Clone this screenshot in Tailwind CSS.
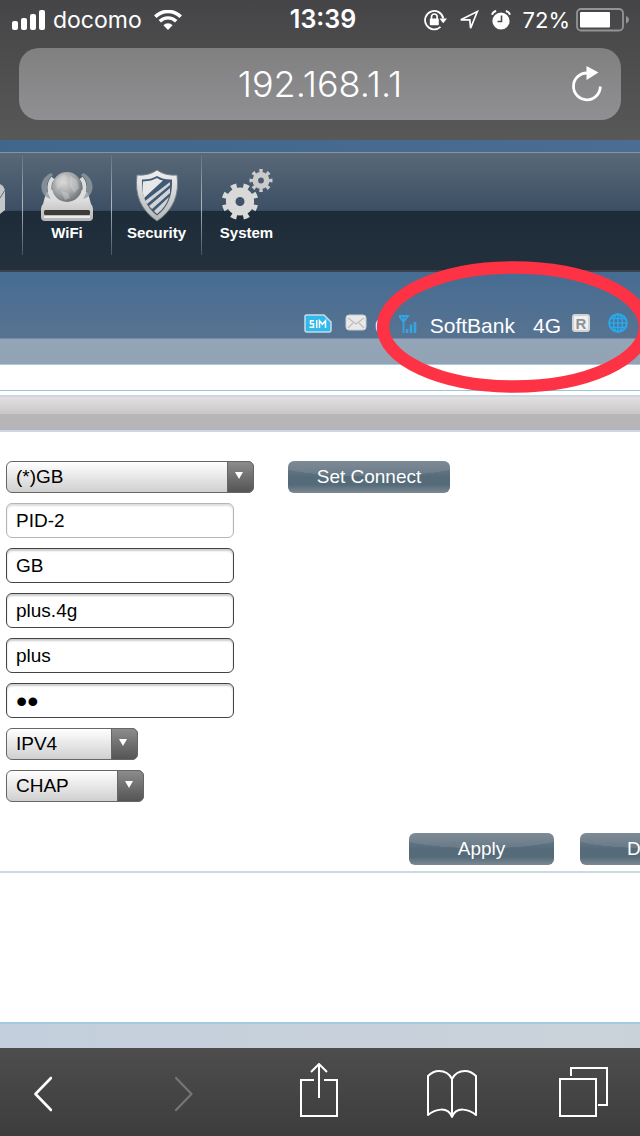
<!DOCTYPE html>
<html lang="en">
<head>
<meta charset="utf-8">
<meta name="viewport" content="width=device-width, initial-scale=1">
<title>192.168.1.1</title>
<script src="https://cdn.jsdelivr.net/npm/@tailwindcss/browser@4"></script>
</head>
<body class="flex min-h-screen flex-col overflow-x-hidden bg-white font-['Liberation_Sans',Arial,sans-serif] text-[19px]">

<header class="h-[140px] bg-linear-to-b from-[#454547] to-[#585858] font-['Inter',sans-serif] text-white">
  <div class="grid h-12 grid-cols-[1fr_auto_1fr] items-center pb-2 pl-3 pr-[6px] text-[22px]">
    <div class="flex items-center">
      <svg class="mr-2 h-5 w-[33px]" viewBox="0 0 33 20" fill="#fff" aria-hidden="true"><rect x="0" y="11" width="6" height="9" rx="2"/><rect x="9" y="8" width="6" height="12" rx="2"/><rect x="18" y="4" width="6" height="16" rx="2"/><rect x="27" y="0" width="6" height="20" rx="2"/></svg>
      <span class="text-[23px]">docomo</span>
      <svg class="ml-3 h-5 w-7" viewBox="0 0 28 20" aria-hidden="true"><path d="M1.3 6.7a18 18 0 0 1 25.4 0" fill="none" stroke="#fff" stroke-width="3.6"/><path d="M5.8 11.3a11.6 11.6 0 0 1 16.4 0" fill="none" stroke="#fff" stroke-width="3.4"/><path d="M14 20l-4.6-4.8a6.6 6.6 0 0 1 9.2 0z" fill="#fff"/></svg>
    </div>
    <time class="text-[25px] font-semibold">13:39</time>
    <div class="mr-[5px] flex items-center justify-end">
      <svg class="mr-3 h-[22px] w-[23px]" viewBox="0 0 23 22" fill="none" stroke="#fff" aria-hidden="true"><path d="M19.300 9.500A9.200 9.200 0 1 0 16.500 17.900" stroke-width="1.800"/><path d="M15.400 9.500h7.600l-3.800 4.800z" fill="#fff" stroke="none"/><rect x="5.800" y="9.600" width="9" height="6.600" rx="1" fill="#fff" stroke="none"/><path d="M7.500 10V7.800a2.800 2.800 0 0 1 5.600 0V10" stroke-width="1.700"/></svg>
      <svg class="mr-3 h-5 w-5" viewBox="0 0 20 20" aria-hidden="true"><path d="M1.800 9.800L18.300 1.600L11.600 18.200L10.800 9.900z" fill="none" stroke="#fff" stroke-width="1.700"/></svg>
      <svg class="mr-3 h-5 w-5" viewBox="0 0 20 20" aria-hidden="true"><circle cx="10" cy="11" r="8.600" fill="#fff"/><path d="M1 4.800A5.500 5.500 0 0 1 5.200 1M19 4.800A5.500 5.500 0 0 0 14.800 1" fill="none" stroke="#fff" stroke-width="1.900"/><path d="M10.500 5.500v6H6.500" fill="none" stroke="#4a4a4c" stroke-width="1.600"/></svg>
      <span>72%</span>
      <svg class="ml-[6px] h-6 w-[53px] shrink-0" viewBox="0 0 53 24" aria-hidden="true"><rect x="1" y="1" width="46" height="21.500" rx="4" fill="none" stroke="#949496" stroke-width="1.800"/><rect x="4" y="4" width="30" height="15.500" rx="1" fill="#fff"/><path d="M50 8c4 1.500 4 6 0 7.500z" fill="#949496"/></svg>
    </div>
  </div>
  <div class="mx-[19px] flex h-[72px] items-center rounded-[20px] bg-linear-to-b from-[#808080] to-[#909094] pr-[18px]">
    <span class="w-[50px]"></span>
    <span class="flex-1 text-center text-[36px] font-light">192.168.1.1</span>
    <button type="button" aria-label="Reload"><svg class="h-9 w-8" viewBox="0 0 32 36"><path d="M29.300 20.500A13.400 13.400 0 1 1 16 7h1" fill="none" stroke="#fff" stroke-width="2.800"/><path d="M15.500 0L27.500 6.500L15.500 14z" fill="#fff"/></svg></button>
  </div>
</header>

<main class="flex flex-1 flex-col overflow-hidden">
  <div class="h-3 bg-linear-to-r from-[#3f678c] to-[#4b6c93]"></div>

  <nav class="flex h-[120px] border-t border-b-2 border-t-[#8495a5] border-b-[#3a434c] bg-[linear-gradient(#596978,#3c4f64_49%,#1e2c3a_50%,#23303c)] text-[15px] font-bold text-white" aria-label="Main">
    <a href="#" aria-label="Messages" class="w-[22px] pt-7"><svg class="h-9 w-2" viewBox="0 0 8 36"><path d="M0 3l3 2 2 4v20l-5 4z" fill="#c4c7c9"/><path d="M0 17l5-8" stroke="#636a70" stroke-width="1"/></svg></a>
    <span class="mt-[2px] h-[100px] w-px bg-linear-to-b from-[#65727f] via-[#b0b8bf] to-[#4a5560]"></span>
    <a href="#" class="flex w-[88px] flex-col items-center pt-4"><svg class="h-[53px] w-14" viewBox="0 0 56 53" aria-hidden="true">
      <defs><linearGradient id="metal" x1="0" y1="0" x2="0" y2="1"><stop offset="0" stop-color="#f0f0f0"/><stop offset="1" stop-color="#b5b5b5"/></linearGradient><radialGradient id="ball" cx=".4" cy=".35" r=".65"><stop offset="0" stop-color="#d8d8d8"/><stop offset=".6" stop-color="#a5a7a9"/><stop offset="1" stop-color="#70767b"/></radialGradient></defs>
      <path d="M7 24L4 35q-2 2-2 5v8q0 4 4 4h44q4 0 4-4v-8q0-3-2-5l-3-11-5-3H12z" fill="url(#metal)"/>
      <path d="M12 4C2 8-1 21 7 28l5 2C6 20 7 11 14 6zM44 4c10 4 13 17 5 24l-5 2c6-10 5-19-2-24z" fill="#929a9f" opacity=".8"/>
      <path d="M14 9c-6 7-4 18 4 23M42 9c6 7 4 18-4 23" fill="none" stroke="#dddddd" stroke-width="4"/>
      <circle cx="28" cy="18" r="15" fill="url(#ball)"/>
      <path d="M17 11l8-6 4 5-5 2-1 5-5 3zM31 7l7 4 2 8-5 5-4-7zM22 22l7 2 2 5-5 2z" fill="#e0e0e0" opacity=".35"/>
      <rect x="5" y="41" width="46" height="5" rx="1.500" fill="#3d3c39"/><rect x="5" y="47" width="46" height="2" fill="#fff" opacity=".7"/></svg>
      <span>WiFi</span></a>
    <span class="mt-[2px] h-[100px] w-px bg-linear-to-b from-[#65727f] via-[#b0b8bf] to-[#4a5560]"></span>
    <a href="#" class="flex w-[89px] flex-col items-center pt-4"><svg class="h-[53px] w-11" viewBox="0 0 44 53" aria-hidden="true">
      <path d="M22 1q8 6 20 5 4 30-20 46Q-2 36 2 6 14 7 22 1z" fill="url(#metal)" stroke="#74818c" stroke-width="1"/>
      <path d="M22 7q7 4 15 3.500 1 24-15 36Q6 34.500 7 10.500 15 11 22 7z" fill="#405a75"/>
      <path d="M22 9q3 2 6 2.500L9 29Q7 22 8 12.500 17 12 22 9z" fill="#e8e8e8"/>
      <path d="M35 13v3L12 35l-2-3zM35 19v5L17 40l-3-3zM34 28q-3 10-12 17l-3-3z" fill="#d2d3d4"/></svg>
      <span>Security</span></a>
    <span class="mt-[2px] h-[100px] w-px bg-linear-to-b from-[#65727f] via-[#b0b8bf] to-[#4a5560]"></span>
    <a href="#" class="flex w-[89px] flex-col items-center pt-4"><svg class="h-[53px] w-[54px]" viewBox="0 0 54 53" fill="none" stroke="#d9d9d9" aria-hidden="true">
      <circle cx="20" cy="32.500" r="9.300" stroke-width="9.600"/><circle cx="20" cy="32.500" r="14.800" stroke-width="7" pathLength="160" stroke-dasharray="9 11" stroke-dashoffset="14.500"/>
      <circle cx="41" cy="11.500" r="5.700" stroke-width="5.600" stroke="#cbcbcb"/><circle cx="41" cy="11.500" r="9" stroke-width="5" stroke="#cbcbcb" pathLength="160" stroke-dasharray="9 11" stroke-dashoffset="4.500"/></svg>
      <span>System</span></a>
  </nav>

  <section class="relative h-[93px] border-b border-[#a9cbe0] bg-[linear-gradient(#466c92,#577391_66px,#94a5b7_67px,#91a3b4)] text-[21px] text-white" aria-label="Connection status">
    <div class="flex h-[67px] items-end justify-end pb-[3px] pr-3">
      <svg class="mb-[3px] mr-[13px] h-[19px] w-7" viewBox="0 0 28 19" role="img" aria-label="SIM card"><path d="M2 1h18l7 7v8q0 2-2 2H3q-2 0-2-2V2z" fill="#2fb9ed" stroke="#c5dce8" stroke-width="1.500"/><path d="M10 6.800H6.500v2.900h3v3.500H5.500M12.700 6v8M15.500 14V6.800l3 3.500 3-3.500V14" fill="none" stroke="#fff" stroke-width="1.500"/></svg>
      <svg class="mb-1 mr-2 h-[18px] w-[22px]" viewBox="0 0 22 18" role="img" aria-label="Messages"><rect x="1" y="1" width="20" height="15" rx="3" fill="#e9e9e9" stroke="#c9ced2"/><path d="M3 4l8 6 8-6M3 14l5-5M19 14l-5-5" fill="none" stroke="#bdbdbd" stroke-width="1.200"/></svg>
      <span class="mr-3 leading-5">0</span>
      <svg class="mb-[2px] mr-[13px] h-[19px] w-[18px]" viewBox="0 0 18 19" fill="none" stroke="#35a4e5" role="img" aria-label="Signal"><path d="M4.500 1v17M0 1h9L4.500 7z" stroke-width="1.800"/><path d="M8 18v-4M12 18V9.500M16 18V7" stroke-width="2.600"/></svg>
      <span class="mr-[18px] leading-5">SoftBank</span>
      <span class="mr-[11px] leading-5">4G</span>
      <span class="mb-1 mr-[18px] grid h-[18px] w-[18px] place-items-center rounded-[3px] border-2 border-[#d2d2d2] bg-[#f0f0f0] text-[15px] font-bold leading-none text-[#8d929a]">R</span>
      <svg class="mb-[3px] h-5 w-5" viewBox="0 0 20 20" fill="none" stroke="#28a9ec" role="img" aria-label="Internet"><circle cx="10" cy="10" r="8.800" stroke-width="2"/><ellipse cx="10" cy="10" rx="4.500" ry="9" stroke-width="1.600"/><path d="M10 1v18M1 10h18M2.500 5.500h15M2.500 14.500h15" stroke-width="1.600"/></svg>
    </div>
    <svg class="pointer-events-none absolute -right-[14px] -top-3 z-10 h-[134px] w-[280px]" viewBox="0 0 280 134" fill="none" aria-hidden="true"><ellipse cx="140" cy="67" rx="131" ry="59.500" stroke="#fd3244" stroke-width="12.500"/></svg>
  </section>

  <div class="h-[26px] border-b border-[#9cc4dc] bg-white"></div>
  <div class="mt-1 h-[37px] border-y-2 border-[#cbd7e2] bg-[linear-gradient(#e2e0e1,#c9c7c8_50%,#b9b6b8_51%,#b6b4b6)]"></div>

  <form class="border-b-2 border-[#cbd9e0] pb-[6px] pl-[6px] pt-[29px]">
    <div class="flex items-start gap-[34px]">
      <div class="flex flex-col items-start gap-[10px]">
        <div class="relative w-[248px]">
          <select aria-label="Profile" class="block h-8 w-full appearance-none rounded-md border border-[#666] bg-linear-to-b from-white to-[#d0d0d0] pl-[9px] leading-7 text-black"><option>(*)GB</option></select>
          <span class="pointer-events-none absolute inset-y-0 right-0 grid w-[27px] place-items-center rounded-r-md border border-[#666] bg-linear-to-b from-[#8c8c8c] to-[#555] pb-1 pr-1"><svg class="h-[7px] w-2" viewBox="0 0 10 8" preserveAspectRatio="none" aria-hidden="true"><path d="M0 0h10L5 8z" fill="#fff"/></svg></span>
        </div>
        <input aria-label="PID" value="PID-2" readonly class="h-[35px] w-[228px] rounded-md border border-[#b5b5b5] bg-white px-[9px] text-black shadow-[inset_0_2px_2px_#ddd]">
        <input aria-label="Name" value="GB" class="h-[35px] w-[228px] rounded-md border border-[#444] bg-white px-[9px] text-black shadow-[inset_0_2px_2px_#ccc]">
        <input aria-label="APN" value="plus.4g" class="h-[35px] w-[228px] rounded-md border border-[#444] bg-white px-[9px] text-black shadow-[inset_0_2px_2px_#ccc]">
        <input aria-label="User name" value="plus" class="h-[35px] w-[228px] rounded-md border border-[#444] bg-white px-[9px] text-black shadow-[inset_0_2px_2px_#ccc]">
        <input aria-label="Password" type="password" value="ab" class="h-[35px] w-[228px] rounded-md border border-[#444] bg-white px-[9px] text-[32px] text-black shadow-[inset_0_2px_2px_#ccc]">
        <div class="relative w-[132px]">
          <select aria-label="IP type" class="block h-8 w-full appearance-none rounded-md border border-[#666] bg-linear-to-b from-white to-[#d0d0d0] pl-[9px] leading-7 text-black"><option>IPV4</option></select>
          <span class="pointer-events-none absolute inset-y-0 right-0 grid w-[27px] place-items-center rounded-r-md border border-[#666] bg-linear-to-b from-[#8c8c8c] to-[#555] pb-1 pr-1"><svg class="h-[7px] w-2" viewBox="0 0 10 8" preserveAspectRatio="none" aria-hidden="true"><path d="M0 0h10L5 8z" fill="#fff"/></svg></span>
        </div>
        <div class="relative w-[138px]">
          <select aria-label="Authentication" class="block h-8 w-full appearance-none rounded-md border border-[#666] bg-linear-to-b from-white to-[#d0d0d0] pl-[9px] leading-7 text-black"><option>CHAP</option></select>
          <span class="pointer-events-none absolute inset-y-0 right-0 grid w-[27px] place-items-center rounded-r-md border border-[#666] bg-linear-to-b from-[#8c8c8c] to-[#555] pb-1 pr-1"><svg class="h-[7px] w-2" viewBox="0 0 10 8" preserveAspectRatio="none" aria-hidden="true"><path d="M0 0h10L5 8z" fill="#fff"/></svg></span>
        </div>
      </div>
      <button type="button" class="h-8 w-[162px] rounded-md bg-[radial-gradient(62%_48%_at_50%_0%,#ffffff18_98%,transparent_100%),linear-gradient(#717f8b,#566b7a_50%,#566b7a_75%,#7c8993)] text-white">Set Connect</button>
    </div>
    <div class="-mr-[85px] mt-[31px] flex justify-end gap-[26px]">
      <button type="button" class="h-8 w-[145px] rounded-md bg-[radial-gradient(62%_48%_at_50%_0%,#ffffff18_98%,transparent_100%),linear-gradient(#717f8b,#566b7a_50%,#566b7a_75%,#7c8993)] text-white">Apply</button>
      <button type="button" class="h-8 w-[145px] rounded-md bg-[radial-gradient(62%_48%_at_50%_0%,#ffffff18_98%,transparent_100%),linear-gradient(#717f8b,#566b7a_50%,#566b7a_75%,#7c8993)] pl-1 text-white">Delete</button>
    </div>
  </form>
  <div class="flex-1"></div>
  <div class="h-[26px] border-t-2 border-[#9fcbe5] bg-linear-to-r from-[#c4cfdd] to-[#cad2d9]"></div>
</main>

<footer class="grid h-[88px] grid-cols-[18px_123fr_18px_107fr_38px_89fr_50px_82fr_49px] items-center bg-linear-to-b from-[#4d4d4e] to-[#3d3d3e] pl-[34px] pr-8">
  <button type="button" aria-label="Back" class="col-start-1"><svg class="mt-1 h-9 w-[18px]" viewBox="0 0 18 36" fill="none" stroke="#fff" stroke-width="2.600" stroke-linecap="round" stroke-linejoin="round"><path d="M17 2L1.500 18L17 34"/></svg></button>
  <button type="button" aria-label="Forward" disabled class="col-start-3"><svg class="mt-1 h-9 w-[18px]" viewBox="0 0 18 36" fill="none" stroke="#767677" stroke-width="2.200" stroke-linecap="round" stroke-linejoin="round"><path d="M1 2L16.500 18L1 34"/></svg></button>
  <button type="button" aria-label="Share" class="col-start-5 pb-1"><svg class="h-[54px] w-[38px]" viewBox="0 0 38 54" fill="none" stroke="#fff" stroke-width="2"><path d="M14 17H1v36h36V17H24M19 35V2M11 9l8-8 8 8"/></svg></button>
  <button type="button" aria-label="Bookmarks" class="col-start-7"><svg class="mt-1 h-[50px] w-[50px]" viewBox="0 0 50 50" fill="none" stroke="#fff" stroke-width="2" stroke-linejoin="round"><path d="M25 10C22 4 18 2 12 2 7 2 4 4 1 7v39c7-6 20-9 24 2 4-11 17-8 24-2V7c-3-3-6-5-11-5-6 0-10 2-13 8zv38"/></svg></button>
  <button type="button" aria-label="Tabs" class="col-start-9"><svg class="h-[50px] w-[49px]" viewBox="0 0 49 50" fill="none" stroke="#fff" stroke-width="2"><rect x="1" y="12" width="36" height="37"/><path d="M12 9V1h36v37h-9"/></svg></button>
</footer>
</body>
</html>
